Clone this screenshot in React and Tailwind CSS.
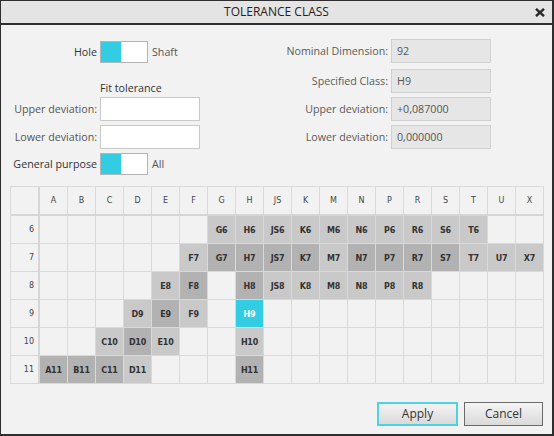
import React from 'react';

const COLS = ['A', 'B', 'C', 'D', 'E', 'F', 'G', 'H', 'JS', 'K', 'M', 'N', 'P', 'R', 'S', 'T', 'U', 'X'];
const ROWS = [6, 7, 8, 9, 10, 11];

// l = light, d = dark, c = selected
const FILLED = {
  6: { G: 'l', H: 'l', JS: 'l', K: 'l', M: 'l', N: 'l', P: 'l', R: 'l', S: 'l', T: 'l' },
  7: { F: 'l', G: 'd', H: 'd', JS: 'd', K: 'd', M: 'l', N: 'd', P: 'd', R: 'd', S: 'd', T: 'l', U: 'l', X: 'l' },
  8: { E: 'l', F: 'd', H: 'd', JS: 'l', K: 'l', M: 'l', N: 'l', P: 'l', R: 'l' },
  9: { D: 'l', E: 'd', F: 'l', H: 'c' },
  10: { C: 'l', D: 'd', E: 'l', H: 'l' },
  11: { A: 'd', B: 'd', C: 'd', D: 'l', H: 'd' },
};

const cellBg = {
  l: 'bg-[#c9c9c9] text-[#333]',
  d: 'bg-[#b2b2b2] text-[#333]',
  c: 'bg-[#33cde3] text-white',
};

function Toggle() {
  return (
    <div className="flex h-[22px] w-[48px] border border-[#b4b4b4] bg-white">
      <div className="w-[20px] bg-[#33cde3]" />
      <div className="w-px bg-[#e6e6e6]" />
      <div className="flex-1 bg-white" />
    </div>
  );
}

function ReadOnly({ label, value, className = '' }) {
  return (
    <div className={`flex items-center gap-[3px] ${className}`}>
      <span className="w-[138px] text-right text-[#5a5a5a]">{label}</span>
      <div className="flex h-[24px] w-[100px] items-center border border-[#d0d0d0] bg-[#e6e6e6] pl-[5px] text-[#555]">
        {value}
      </div>
    </div>
  );
}

export default function App() {
  return (
    <div
      className="flex h-[436px] w-[554px] flex-col border-t border-l border-r-2 border-b-2 border-[#2e2e2e] bg-[#f2f2f2] text-[10.7px] text-[#333]"
      style={{ fontFamily: '"Open Sans", "Noto Sans", sans-serif' }}
    >
      {/* title bar */}
      <div className="relative flex h-[24px] shrink-0 items-center justify-center border-b-2 border-[#2e2e2e] bg-[#e4e4e4] text-[12px] text-[#222]">
        TOLERANCE CLASS
        <svg className="absolute right-[7px] top-[7px]" width="10" height="9" viewBox="0 0 10 9">
          <path d="M1 0.8 L9 8.2 M9 0.8 L1 8.2" stroke="#2a2a2a" strokeWidth="2.4" />
        </svg>
      </div>

      {/* top section */}
      <div className="flex">
        <div className="flex w-[249px] flex-col pt-[16px]">
          <div className="flex items-center gap-[3px]">
            <span className="w-[96px] text-right text-[#333]">Hole</span>
            <Toggle />
            <span className="ml-[1px] text-[#555]">Shaft</span>
          </div>
          <div className="mt-[17px] flex h-[16px] items-center pl-[99px] text-[#333]">Fit tolerance</div>
          <div className="mt-[1px] flex items-center gap-[3px]">
            <span className="w-[96px] text-right text-[#555]">Upper deviation:</span>
            <div className="h-[24px] w-[100px] border border-[#c8c8c8] bg-white" />
          </div>
          <div className="mt-[4px] flex items-center gap-[3px]">
            <span className="w-[96px] text-right text-[#555]">Lower deviation:</span>
            <div className="h-[24px] w-[100px] border border-[#c8c8c8] bg-white" />
          </div>
          <div className="mt-[4px] flex items-center gap-[3px]">
            <span className="w-[96px] text-right text-[#333]">General purpose</span>
            <Toggle />
            <span className="ml-[1px] text-[#555]">All</span>
          </div>
        </div>
        <div className="flex flex-col pt-[14px]">
          <ReadOnly label="Nominal Dimension:" value="92" />
          <ReadOnly label="Specified Class:" value="H9" className="mt-[6px]" />
          <ReadOnly label="Upper deviation:" value="+0,087000" className="mt-[4px]" />
          <ReadOnly label="Lower deviation:" value="0,000000" className="mt-[4px]" />
        </div>
      </div>

      {/* tolerance grid */}
      <div
        className="ml-[9px] mt-[11px] grid w-[534px] grid-cols-[29px_repeat(18,28px)] grid-rows-[29px_repeat(6,28px)] border-t border-l border-[#d9d9d9]"
        style={{ fontFamily: '"DejaVu Sans", Verdana, sans-serif' }}
      >
        <div className="border-r-2 border-b-2 border-[#d6d6d6]" />
        {COLS.map((c) => (
          <div
            key={c}
            className="flex items-center justify-center border-r border-b-2 border-[#d9d9d9] border-b-[#d6d6d6] text-[8px] text-[#444]"
          >
            {c}
          </div>
        ))}
        {ROWS.map((r) => (
          <React.Fragment key={r}>
            <div className="flex items-center justify-end border-r-2 border-b border-[#d9d9d9] border-r-[#d6d6d6] pr-[4px] text-[8px] text-[#444]">
              {r}
            </div>
            {COLS.map((c) => {
              const f = FILLED[r][c];
              return (
                <div
                  key={c}
                  className={`flex items-center justify-center border-r border-b border-[#d9d9d9] pt-[2px] text-[8px] font-bold tracking-[-0.2px] ${
                    f ? cellBg[f] : 'bg-[#f2f2f2]'
                  }`}
                >
                  {f ? `${c}${r}` : ''}
                </div>
              );
            })}
          </React.Fragment>
        ))}
      </div>

      {/* buttons */}
      <div className="mr-[9px] mt-[18px] flex justify-end gap-[6px] text-[12px]">
        <button className="h-[24px] w-[81px] border-2 border-[#4fd2e5] bg-linear-to-b from-[#f4f4f4] to-[#dadada] text-[#333]">
          Apply
        </button>
        <button className="h-[24px] w-[79px] border border-[#6a6a6a] bg-linear-to-b from-[#f4f4f4] to-[#dadada] text-[#333]">
          Cancel
        </button>
      </div>
    </div>
  );
}
